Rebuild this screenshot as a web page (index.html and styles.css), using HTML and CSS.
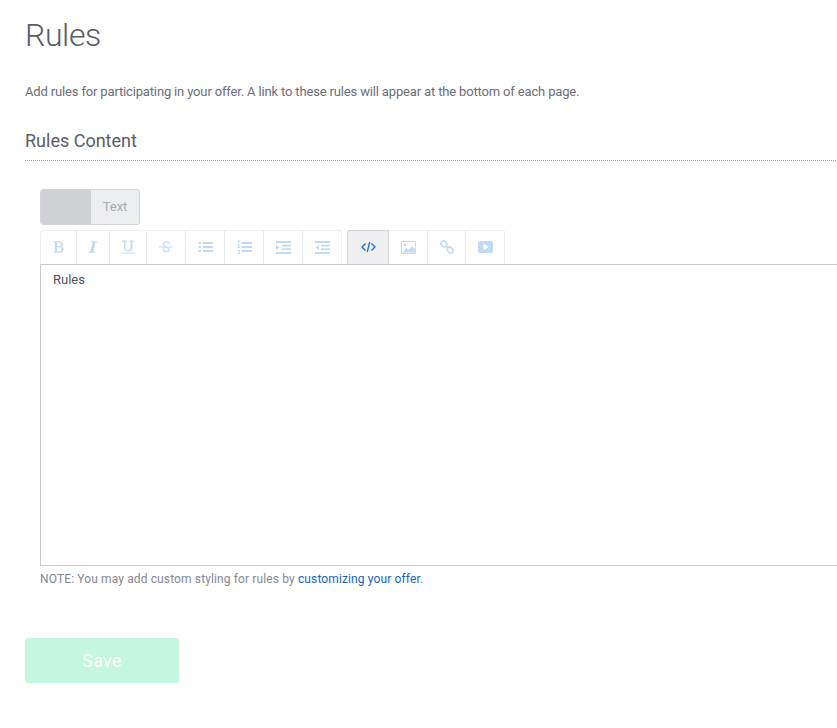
FILE: index.html
```html
<!DOCTYPE html>
<html lang="en">
<head>
  <meta charset="UTF-8" />
  <title>Rules</title>
  <link rel="stylesheet" href="styles.css">
</head>
<body>
  <div class="page">
    <h1>Rules</h1>
    <p class="intro">Add rules for participating in your offer. A link to these rules will appear at the bottom of each page.</p>
    <h2>Rules Content</h2>

    <div class="editor-wrap">
      <div class="mode-toggle">
        <span class="mode mode-visual"></span>
        <span class="mode mode-text">Text</span>
      </div>

      <div class="toolbar">
        <div class="tool-group">
          <span class="tool w36"><svg width="14" height="14" viewBox="0 0 14 14"><path d="M1.500 1.200h6.100c2.100 0 3.400 1 3.400 2.800 0 1.300-.7 2.100-1.900 2.500 1.600.3 2.600 1.300 2.600 2.800 0 2.100-1.600 3.400-3.900 3.400H1.500v-1l1.400-.2V2.400L1.500 2.200z M5.100 2.500v3.600h1.900c1.300 0 1.900-.6 1.900-1.800s-.6-1.800-1.900-1.800z M5.100 7.300v4.200h2.100c1.400 0 2.100-.7 2.100-2.100s-.8-2.100-2.300-2.100z" fill="#c2daf2" fill-rule="evenodd"/></svg></span>
          <span class="tool w33"><svg width="14" height="14" viewBox="0 0 14 14"><path d="M5 1.200h6.500l-.2 1-1.900.3-2.100 9 1.700.3-.2 1H2.300l.2-1 1.900-.3 2.100-9-1.700-.3z" fill="#c2daf2"/></svg></span>
          <span class="tool w37"><svg width="14" height="14" viewBox="0 0 14 14"><path d="M1 .6h4.700v.9l-1.300.2v5.800c0 1.900.8 2.800 2.500 2.800s2.600-.9 2.600-2.800V1.700L8.300 1.500V.6h4.400v.9l-1.200.2v5.800c0 2.600-1.500 3.900-4.300 3.900S3 10.100 3 7.600V1.700L1 1.500z M.8 12.500h12.400v1H.8z" fill="#c2daf2"/></svg></span>
          <span class="tool w39"><svg width="14" height="14" viewBox="0 0 14 14"><path d="M10.300 4.700V2.500C9.500 2 8.500 1.700 7.300 1.700 5.500 1.700 4.200 2.700 4.200 4.300c0 1.900 1.900 2.400 3.500 3 1.400.5 2.400 1 2.400 2.300 0 1.300-1.200 2.100-2.800 2.100-1.200 0-2.200-.3-3-.9V8.500" fill="none" stroke="#c2daf2" stroke-width="1.100"/><path d="M0 6.600h14v1H0z" fill="#c2daf2"/></svg></span>
          <span class="tool w39"><svg width="15" height="12" viewBox="0 0 15 12"><path d="M.5 1h2.500v2H.5z M.5 5h2.500v2H.5z M.5 9h2.500v2H.5z M4.500 1H15v2H4.500z M4.500 5H15v2H4.500z M4.500 9H15v2H4.500z" fill="#c2daf2"/></svg></span>
          <span class="tool w39"><svg width="15" height="14" viewBox="0 0 15 14"><path d="M1 0h1.200v3H1z M.3 4.500h2.500v1L1.500 7h1.300v1H.3V7l1.400-1.600H.3z M.3 10h2.500v4H.3v-.8h1.600v-.8H.8v-.7h1.100v-.9H.3z M4.500 2H15v2H4.500z M4.500 6H15v2H4.500z M4.500 10H15v2H4.500z" fill="#c2daf2"/></svg></span>
          <span class="tool w39"><svg width="15" height="13" viewBox="0 0 15 13"><path d="M0 0h15v2H0z M6 3.700h9v1.700H6z M6 7.300h9V9H6z M0 11h15v2H0z M0 4l3.500 2.500L0 9z" fill="#c2daf2"/></svg></span>
          <span class="tool w38"><svg width="15" height="13" viewBox="0 0 15 13"><path d="M0 0h15v2H0z M6 3.700h9v1.700H6z M6 7.300h9V9H6z M0 11h15v2H0z M4 4L.5 6.500 4 9z" fill="#c2daf2"/></svg></span>
        </div>
        <div class="tool-group">
          <span class="tool w42 tool-active"><svg width="15" height="12" viewBox="0 0 15 12"><path d="M4.500 2.500L1 6l3.500 3.500 M10.500 2.500L14 6l-3.500 3.500 M8.700 1L6.300 11" fill="none" stroke="#1b6fc9" stroke-width="1.300"/></svg></span>
          <span class="tool w39"><svg width="15" height="13" viewBox="0 0 15 13"><path d="M.5.500h14v12H.5z" fill="none" stroke="#c2daf2"/><circle cx="4" cy="3.800" r="1.500" fill="#c2daf2"/><path d="M1.500 11.500l4-4.500 2.500 2 3-4 3 3.500v3z" fill="#c2daf2"/></svg></span>
          <span class="tool w38"><svg width="14" height="14" viewBox="0 0 14 14"><rect x="-3.200" y="-2.400" width="6.400" height="4.800" rx="2.200" transform="translate(3.900 3.900) rotate(45)" fill="none" stroke="#c2daf2" stroke-width="1.500"/><rect x="-3.200" y="-2.400" width="6.400" height="4.800" rx="2.200" transform="translate(10.100 10.100) rotate(45)" fill="none" stroke="#c2daf2" stroke-width="1.500"/><path d="M5.800 5.800l2.400 2.400" stroke="#c2daf2" stroke-width="1.500"/></svg></span>
          <span class="tool w38"><svg width="15" height="12" viewBox="0 0 15 12"><path d="M2 0h11a2 2 0 0 1 2 2v8a2 2 0 0 1-2 2H2a2 2 0 0 1-2-2V2a2 2 0 0 1 2-2z M5.500 2.800v6.400L11 6z" fill="#c2daf2" fill-rule="evenodd"/></svg></span>
        </div>
      </div>

      <div class="editor-box">Rules</div>
      <p class="note">NOTE: You may add custom styling for rules by <a href="#">customizing your offer</a>.</p>
    </div>

    <button class="save-btn">Save</button>
  </div>
</body>
</html>
```

FILE: styles.css
```css
html, body {
  margin: 0;
  padding: 0;
  overflow: hidden;
}
body {
  font-family: Roboto, "Liberation Sans", sans-serif;
  color: #5c5f6b;
  background: #fff;
}
.page {
  width: 860px;
  padding: 17px 0 0 25px;
  box-sizing: border-box;
}
h1 {
  margin: 0;
  font-size: 32px;
  line-height: 37px;
  font-weight: 300;
  letter-spacing: -0.4px;
  color: #5a5d68;
}
.intro {
  margin: 29px 0 0;
  font-size: 13px;
  line-height: 18px;
  letter-spacing: -0.155px;
  color: #6b6e7a;
}
h2 {
  margin: 28px 0 0;
  padding-bottom: 8px;
  font-size: 18px;
  line-height: 23px;
  font-weight: 400;
  color: #5a5d68;
  border-bottom: 1px dotted #9a9dab;
}
.editor-wrap {
  padding: 28px 0 0 15px;
}
.mode-toggle {
  display: flex;
  width: 100px;
  height: 36px;
  box-sizing: border-box;
  border: 1px solid #d3d4d8;
  border-radius: 3px;
  overflow: hidden;
  margin-bottom: 5px;
}
.mode-visual {
  width: 50px;
  background: #d0d1d5;
}
.mode-text {
  flex: 1;
  display: flex;
  align-items: center;
  justify-content: center;
  padding-bottom: 2px;
  background: #edeef0;
  font-size: 13px;
  color: #a9abb3;
}
.toolbar {
  display: flex;
  gap: 5px;
  height: 34px;
}
.tool-group {
  display: flex;
  border: 1px solid #eeeff1;
  border-bottom: 0;
  border-radius: 3px 3px 0 0;
}
.tool {
  display: flex;
  align-items: center;
  justify-content: center;
  box-sizing: border-box;
  padding-bottom: 1px;
  border-right: 1px solid #e8e9eb;
}
.tool:last-child {
  border-right: 0;
}
.w33 { width: 33px; }
.w36 { width: 36px; }
.w37 { width: 37px; }
.w38 { width: 38px; }
.w39 { width: 39px; }
.w42 { width: 42px; }
.tool-active {
  background: #edeef0;
  border: 1px solid #d3d4d8;
  border-bottom: 0;
  border-radius: 3px 0 0 0;
  margin: -1px 0 0 -1px;
}
.editor-box {
  height: 302px;
  box-sizing: border-box;
  padding: 6px 12px;
  border: 1px solid #c8c9cc;
  font-size: 13px;
  line-height: 18px;
  color: #50535c;
}
.note {
  margin: 5px 0 0;
  font-size: 12px;
  line-height: 16px;
  letter-spacing: 0.125px;
  color: #858894;
}
.note a {
  color: #1565c0;
  text-decoration: none;
}
.save-btn {
  display: block;
  margin-top: 51px;
  width: 154px;
  height: 45px;
  border: 0;
  border-radius: 3px;
  background: #c4f6e0;
  color: #fff;
  font-family: inherit;
  font-size: 18px;
  letter-spacing: 0.3px;
}
```
